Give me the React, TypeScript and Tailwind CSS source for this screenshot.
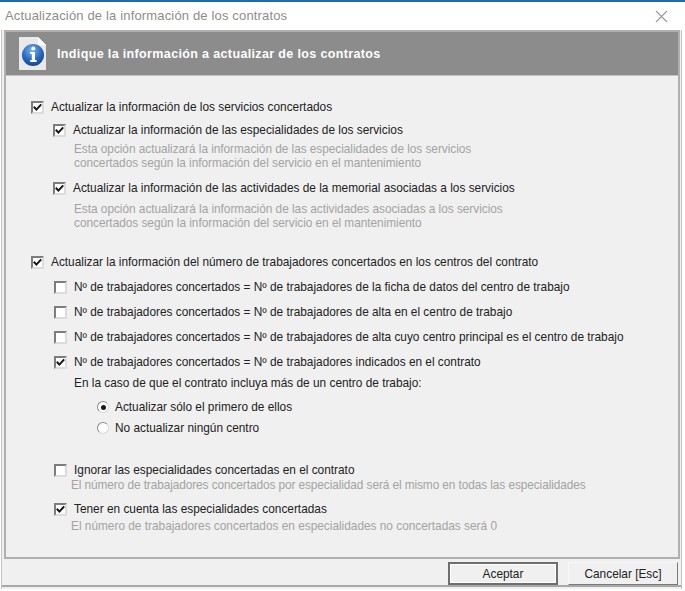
import React from "react";

function Check({ checked }: { checked?: boolean }) {
  return (
    <span className="w-[13px] h-[13px] shrink-0 bg-white border-2 border-t-[#7d7d7d] border-l-[#7d7d7d] border-r-[#dcdcdc] border-b-[#dcdcdc] flex items-center justify-center">
      {checked && (
        <svg width="9" height="9" viewBox="0 0 9 9" className="shrink-0">
          <path d="M0.8 3.8 L3.4 6.6 L8.2 1.4" fill="none" stroke="#141414" strokeWidth="2" />
        </svg>
      )}
    </span>
  );
}

function Radio({ checked }: { checked?: boolean }) {
  return (
    <span className="w-[12px] h-[12px] shrink-0 rounded-full bg-white border border-t-[#8a8a8a] border-l-[#8a8a8a] border-r-[#d8d8d8] border-b-[#d8d8d8] flex items-center justify-center">
      {checked && <span className="w-[5px] h-[5px] rounded-full bg-[#1a1a1a]" />}
    </span>
  );
}

function Row({ h, pl, gap = "gap-[7px]", checked, radio, children }: { h: string; pl: string; gap?: string; checked?: boolean; radio?: boolean; children: React.ReactNode }) {
  return (
    <div className={`flex items-center ${h} ${pl} ${gap}`}>
      {radio ? <Radio checked={checked} /> : <Check checked={checked} />}
      <span className="whitespace-nowrap">{children}</span>
    </div>
  );
}

function InfoIcon() {
  return (
    <svg width="28" height="34" viewBox="0 0 28 34" className="shrink-0">
      <path d="M0 0 H19 L27 8 V33 H0 Z" fill="#e9e9e9" />
      <path d="M19 0 L27 8 H19 Z" fill="#ffffff" />
      <defs>
        <radialGradient id="b" cx="45%" cy="30%" r="75%">
          <stop offset="0%" stopColor="#7fb2ec" />
          <stop offset="60%" stopColor="#2566bd" />
          <stop offset="100%" stopColor="#123f86" />
        </radialGradient>
      </defs>
      <circle cx="14" cy="18" r="11" fill="url(#b)" />
      <circle cx="14.3" cy="11.5" r="2" fill="#fff" />
      <path d="M11.2 15 H16 V23 H17.6 V25 H11.2 V23 H12.8 V17 H11.2 Z" fill="#fff" />
    </svg>
  );
}

export default function App() {
  return (
    <div className="w-[685px] h-[591px] overflow-hidden bg-white flex flex-col text-[11.85px] leading-[14px] text-[#222222] font-['Liberation_Sans',Arial,sans-serif]">
      <div className="h-[2px] bg-[#1b6cb0] shrink-0" />
      <div className="h-[28px] shrink-0 flex items-center justify-between pl-[5px] pr-[14px] mr-[3px] text-[#8f8c88] text-[13px] tracking-[0.16px]">
        <span>Actualización de la información de los contratos</span>
        <svg width="13" height="13" viewBox="0 0 13 13">
          <path d="M1 1 L12 12 M12 1 L1 12" stroke="#9a9a9a" strokeWidth="1.1" fill="none" />
        </svg>
      </div>
      <div className="h-[559px] shrink-0 flex flex-col bg-[#f0f0f0] mr-[3px] ml-[1px] border-l border-r border-[#c4c4c4]">
        <div className="ml-[2px] mr-[1px] h-[529px] shrink-0 flex flex-col border-2 border-[#b0b0b0]">
          <div className="h-[44px] shrink-0 bg-[#8c8c8c] border-b border-[#c4c4c4] flex items-center pl-[13px] gap-[10px] text-white font-bold text-[12.5px] tracking-[0.36px]">
            <InfoIcon />
            <span className="whitespace-nowrap">Indique la información a actualizar de los contratos</span>
          </div>
          <div className="flex-1 flex flex-col pt-[24px] min-h-0">
            <Row h="h-[14px]" pl="pl-[25px]" checked>Actualizar la información de los servicios concertados</Row>
            <Row h="h-[14px] mt-[9px]" pl="pl-[47px]" checked>Actualizar la información de las especialidades de los servicios</Row>
            <div className="pl-[68px] mt-[5px] text-[#a3a3a3] whitespace-nowrap tracking-[-0.04px]">
              <div>Esta opción actualizará la información de las especialidades de los servicios</div>
              <div>concertados según la información del servicio en el mantenimiento</div>
            </div>
            <Row h="h-[14px] mt-[11px]" pl="pl-[47px]" checked>Actualizar la información de las actividades de la memorial asociadas a los servicios</Row>
            <div className="pl-[68px] mt-[7px] text-[#a3a3a3] whitespace-nowrap tracking-[-0.03px]">
              <div>Esta opción actualizará la información de las actividades asociadas a los servicios</div>
              <div>concertados según la información del servicio en el mantenimiento</div>
            </div>
            <Row h="h-[14px] mt-[25px]" pl="pl-[25px]" checked>Actualizar la información del número de trabajadores concertados en los centros del contrato</Row>
            <Row h="h-[14px] mt-[11px]" pl="pl-[48px]">Nº de trabajadores concertados = Nº de trabajadores de la ficha de datos del centro de trabajo</Row>
            <Row h="h-[14px] mt-[11px]" pl="pl-[48px]">Nº de trabajadores concertados = Nº de trabajadores de alta en el centro de trabajo</Row>
            <Row h="h-[14px] mt-[11px]" pl="pl-[48px]">Nº de trabajadores concertados = Nº de trabajadores de alta cuyo centro principal es el centro de trabajo</Row>
            <Row h="h-[14px] mt-[11px]" pl="pl-[48px]" checked>Nº de trabajadores concertados = Nº de trabajadores indicados en el contrato</Row>
            <div className="pl-[68px] mt-[7px] whitespace-nowrap">En la caso de que el contrato incluya más de un centro de trabajo:</div>
            <Row h="h-[14px] mt-[10px]" pl="pl-[91px]" gap="gap-[6px]" radio checked>Actualizar sólo el primero de ellos</Row>
            <Row h="h-[14px] mt-[7px]" pl="pl-[91px]" gap="gap-[6px]" radio>No actualizar ningún centro</Row>
            <Row h="h-[14px] mt-[28px]" pl="pl-[48px]">Ignorar las especialidades concertadas en el contrato</Row>
            <div className="pl-[65px] mt-[1px] text-[#a3a3a3] whitespace-nowrap tracking-[-0.085px]">El número de trabajadores concertados por especialidad será el mismo en todas las especialidades</div>
            <Row h="h-[14px] mt-[10px]" pl="pl-[48px]" checked>Tener en cuenta las especialidades concertadas</Row>
            <div className="pl-[65px] mt-[3px] text-[#a3a3a3] whitespace-nowrap">El número de trabajadores concertados en especialidades no concertadas será 0</div>
          </div>
        </div>
        <div className="h-[28px] shrink-0 flex items-start pt-[3px] justify-end gap-[10px] pr-[3px] border-b-2 border-[#a8a8a8]">
          <button className="w-[110px] h-[23px] bg-[#f0f0f0] border-2 border-[#6e6e6e] shadow-[inset_0_0_0_1px_#ffffff]">Aceptar</button>
          <button className="w-[110px] h-[23px] bg-[#f0f0f0] border border-t-[#f8f8f8] border-l-[#f8f8f8] border-r-[#7a7a7a] border-b-[#7a7a7a]">Cancelar [Esc]</button>
        </div>
      </div>
    </div>
  );
}
